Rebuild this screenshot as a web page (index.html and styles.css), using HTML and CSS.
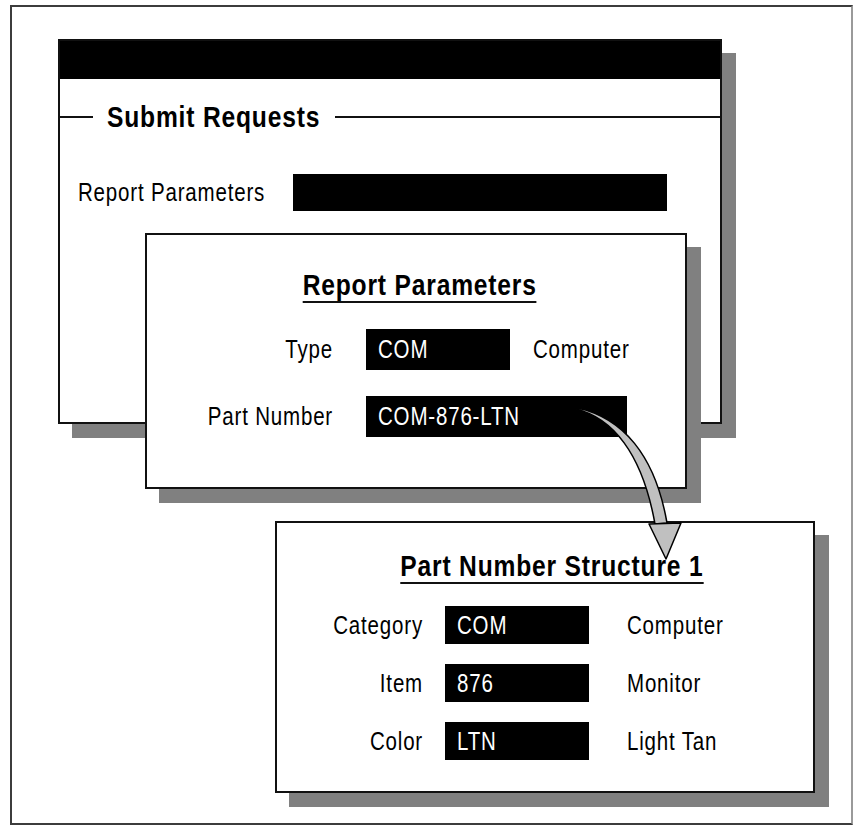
FILE: index.html
```html
<!DOCTYPE html>
<html lang="en">
<head>
    <meta charset="UTF-8">
    <title>Part Number Structure</title>
    <link rel="stylesheet" href="styles.css">
</head>
<body>
    <div class="frame">
        <!-- main request window -->
        <div class="window win-submit">
            <div class="titlebar"></div>
            <div class="group-title"><span class="group-text"><span class="narrow">Submit Requests</span></span></div>
            <div class="submit-row">
                <span class="label">Report Parameters</span>
                <span class="field field-wide"></span>
            </div>
        </div>

        <!-- parameters dialog -->
        <div class="window win-params">
            <div class="dialog-head"><span>Report Parameters</span></div>
            <div class="rows rows-params">
                <div class="row">
                    <span class="label">Type</span>
                    <span class="field"><span class="value">COM</span></span>
                    <span class="desc">Computer</span>
                </div>
                <div class="row">
                    <span class="label">Part Number</span>
                    <span class="field field-long"><span class="value">COM-876-LTN</span></span>
                </div>
            </div>
        </div>

        <!-- structure dialog -->
        <div class="window win-structure">
            <div class="dialog-head"><span>Part Number Structure 1</span></div>
            <div class="rows rows-structure">
                <div class="row">
                    <span class="label">Category</span>
                    <span class="field"><span class="value">COM</span></span>
                    <span class="desc">Computer</span>
                </div>
                <div class="row">
                    <span class="label">Item</span>
                    <span class="field"><span class="value">876</span></span>
                    <span class="desc">Monitor</span>
                </div>
                <div class="row">
                    <span class="label">Color</span>
                    <span class="field"><span class="value">LTN</span></span>
                    <span class="desc">Light Tan</span>
                </div>
            </div>
        </div>

        <svg class="arrow" viewBox="0 0 853 830" xmlns="http://www.w3.org/2000/svg">
            <path d="M576 409 C612 418 642 452 655 524 L667 523 C655 454 622 418 578 408 Z" fill="#c0c0c0" stroke="#000" stroke-width="1.5" stroke-linejoin="round"/>
            <path d="M649 524 L681 523 L666 559 Z" fill="#c0c0c0" stroke="#000" stroke-width="1.5" stroke-linejoin="round"/>
        </svg>
    </div>
</body>
</html>
```

FILE: styles.css
```css
body {
    margin: 0;
    background-color: #fff;
    font-family: "Liberation Sans", Arial, sans-serif;
    color: #000;
}

/* Arial Narrow is not around, so squeeze Liberation Sans instead */
.narrow, .label, .desc, .value, .dialog-head span {
    display: inline-block;
    white-space: nowrap;
    transform: scaleX(0.82);
}

.frame {
    position: relative;
    box-sizing: border-box;
    margin: 5px 0 0 10px;
    width: 843px;
    height: 820px;
    border: 2px solid #3c3c3c;
    border-right-color: #9a9a9a;
    box-shadow: 14px 6px 0 #c8c8c8;
}

.window {
    position: absolute;
    box-sizing: border-box;
    background-color: #fff;
    border: 2px solid #111;
    box-shadow: 14px 14px 0 #808080;
}

.win-submit {
    left: 46px;
    top: 32px;
    width: 664px;
    height: 385px;
}

.win-params {
    left: 133px;
    top: 226px;
    width: 542px;
    height: 256px;
}

.win-structure {
    left: 263px;
    top: 514px;
    width: 540px;
    height: 272px;
}

.titlebar {
    height: 38px;
    background-color: #000;
}

.group-title {
    display: flex;
    align-items: center;
    height: 40px;
    margin-top: 18px;
    font-size: 30px;
    font-weight: bold;
    letter-spacing: 1px;
}

.group-title::before,
.group-title::after {
    content: "";
    height: 2px;
    background-color: #111;
}

.group-title::before {
    width: 33px;
}

.group-title::after {
    flex: 1;
}

.group-text {
    width: 214px;
    padding: 0 14px;
}

.group-text .narrow {
    transform-origin: left center;
}

.label, .desc, .field {
    font-size: 25px;
    letter-spacing: 1px;
}

.submit-row {
    display: flex;
    align-items: center;
    margin-top: 37px;
    padding-left: 18px;
}

.submit-row .label {
    width: 215px;
    transform-origin: left center;
}

.field {
    display: flex;
    align-items: center;
    box-sizing: border-box;
    width: 144px;
    padding-left: 12px;
    background-color: #000;
    color: #fff;
}

.value, .desc {
    transform-origin: left center;
}

.field-wide {
    width: 374px;
    height: 37px;
}

.field-long {
    width: 261px;
}

.dialog-head {
    text-align: center;
    font-size: 30px;
    font-weight: bold;
    letter-spacing: 1px;
}

.dialog-head span {
    line-height: 30px;
    padding-bottom: 1px;
    border-bottom: 2px solid #111;
}

.win-params .dialog-head {
    margin-top: 33px;
    padding-left: 8px;
}

.win-structure .dialog-head {
    margin-top: 26px;
    padding-left: 13px;
}

.rows {
    display: flex;
    flex-direction: column;
}

.row {
    display: flex;
    align-items: center;
}

.row .label {
    text-align: right;
    transform-origin: right center;
}

.rows-params {
    margin-top: 26px;
    gap: 26px;
}

.rows-params .row,
.rows-params .field {
    height: 41px;
}

.rows-params .label {
    width: 186px;
    margin-right: 33px;
}

.rows-params .desc {
    margin-left: 23px;
}

.rows-structure {
    margin-top: 22px;
    gap: 20px;
}

.rows-structure .row,
.rows-structure .field {
    height: 38px;
}

.rows-structure .label {
    width: 146px;
    margin-right: 22px;
}

.rows-structure .desc {
    margin-left: 38px;
}

.arrow {
    position: absolute;
    left: -12px;
    top: -7px;
    width: 853px;
    height: 830px;
    pointer-events: none;
}
```
